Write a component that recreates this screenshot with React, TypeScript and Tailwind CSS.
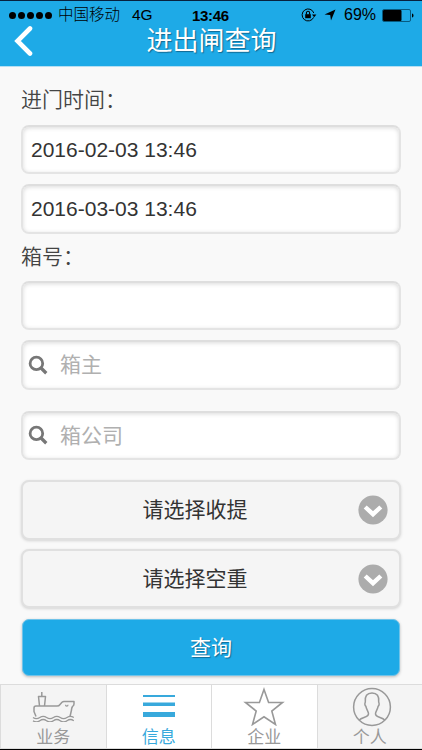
import React from "react";

const inset = "rounded-lg border-2 border-[#e4e4e4] border-t-[#dedede] bg-white shadow-[inset_0_1px_4px_rgba(0,0,0,0.15)]";

function Field({ value, className }: { value?: string; className: string }) {
  return (
    <div className={`${inset} flex items-center px-[8px] text-[21px] leading-none text-[#333] ${className}`}>
      {value}
    </div>
  );
}

function SearchField({ label, className }: { label: string; className: string }) {
  return (
    <div className={`${inset} flex items-center pb-px pl-[5px] ${className}`}>
      <svg width="20" height="20" viewBox="0 0 20 20" fill="none" stroke="#777">
        <circle cx="8.4" cy="8.4" r="6.3" strokeWidth="2.8" />
        <path d="M12.5 12.5L18.3 18.2" strokeWidth="3.3" />
      </svg>
      <span className="ml-[12px] text-[21px] leading-none text-[#b0b0b0]">{label}</span>
    </div>
  );
}

function SelectBox({ label, className }: { label: string; className: string }) {
  return (
    <div
      className={`flex items-center rounded-lg border-2 border-[#e0e0e0] bg-[#f5f5f5] pr-[11px] pl-10 shadow-[0_1px_3px_rgba(0,0,0,0.15)] ${className}`}
    >
      <span className="flex-1 pr-[31px] pb-px text-center text-[21px] leading-none text-[#333]">{label}</span>
      <svg width="30" height="30" viewBox="0 0 30 30">
        <circle cx="15" cy="15" r="14.6" fill="#acacac" />
        <path d="M7.2 12L15 19.2L22.8 12" fill="none" stroke="#fff" strokeWidth="4.4" />
      </svg>
    </div>
  );
}

function Tab({
  label,
  active,
  white,
  children,
}: {
  label: string;
  active?: boolean;
  white?: boolean;
  children: React.ReactNode;
}) {
  return (
    <div
      className={`flex flex-1 flex-col items-center border-l border-[#dcdcdc] ${white ? "bg-white" : "bg-[#f4f4f4]"} ${active ? "text-[#38a9dc]" : "text-[#999]"}`}
    >
      <div className="flex h-[42px] items-center">{children}</div>
      <span className="text-[17px] leading-[21px]">{label}</span>
    </div>
  );
}

export default function App() {
  return (
    <div className="flex h-[750px] w-[422px] flex-col overflow-hidden border-t border-b border-t-[#07213e] border-b-black bg-[#f9f9f9] font-['Liberation_Sans','Noto_Sans_CJK_SC',sans-serif]">
      <header className="h-[66px] border-b border-[#b5dff3] bg-[#1eaae7]">
        <div className="flex h-[25px] items-center pt-[3px] pl-[9px] text-[15.5px] leading-none text-black">
          <div className="flex gap-[2px]">
            {[0, 1, 2, 3, 4].map((i) => (
              <span key={i} className="size-[7px] rounded-full bg-black" />
            ))}
          </div>
          <span className="ml-[6px] w-[74px] font-light">中国移动</span>
          <span className="w-[60px]">4G</span>
          <span className="w-[109px] text-[15px] font-bold tracking-[-0.3px]">13:46</span>
          <svg width="16" height="14" viewBox="0 0 16 14" fill="none" stroke="#000">
            <path d="M12.6 9.4A6 6 0 1 1 12.8 5" strokeWidth="1" />
            <path d="M11 6.5h4.4L13.2 9.2z" fill="#000" stroke="none" />
            <rect x="4.2" y="6.2" width="5.6" height="4" fill="#000" stroke="none" />
            <path d="M5.4 6.4V4.9a1.6 1.6 0 0 1 3.2 0v1.5" strokeWidth="1.1" />
          </svg>
          <svg className="ml-[7px]" width="12" height="12" viewBox="0 0 12 12">
            <path d="M11.5.5L7 11.5L6.2 6L.5 5.4z" />
          </svg>
          <span className="ml-[8px] w-[38px] text-[16px]">69%</span>
          <svg width="32" height="13" viewBox="0 0 32 13">
            <rect x=".5" y=".5" width="28" height="12" rx="1.5" fill="none" stroke="#075a80" />
            <rect x="1" y="1" width="18.5" height="11" rx="1" />
            <path d="M30 4.5c2 .5 2 3.5 0 4z" />
          </svg>
        </div>
        <div className="flex h-[30px] items-center pl-[13px]">
          <svg width="22" height="30" viewBox="0 0 22 30" fill="none" stroke="#fff">
            <path d="M17 2.5L4.5 15L17 27.5" strokeWidth="4.6" strokeLinecap="round" strokeLinejoin="miter" />
          </svg>
          <h1 className="flex-1 pr-[34px] pb-px text-center text-[26px] leading-none font-normal text-white [text-shadow:1px_1px_1px_#126992]">
            进出闸查询
          </h1>
        </div>
      </header>

      <main className="flex flex-1 flex-col pr-[21px] pl-[21px]">
        <label className="mt-[20px] h-[26px] text-[21px] leading-[26px] font-[350] text-[#444]">进门时间：</label>
        <Field className="mt-[12px] h-[49px]" value="2016-02-03 13:46" />
        <Field className="mt-[10px] h-[50px] pb-px" value="2016-03-03 13:46" />
        <label className="mt-[10px] h-[26px] text-[21px] leading-[26px] font-[350] text-[#444]">箱号：</label>
        <Field className="mt-[11px] h-[49px]" />
        <SearchField className="mt-[10px] h-[50px]" label="箱主" />
        <SearchField className="mt-[21px] h-[49px]" label="箱公司" />
        <SelectBox className="mt-[20px] h-[60px]" label="请选择收提" />
        <SelectBox className="mt-[9px] h-[59px]" label="请选择空重" />
        <button className="mx-px mt-[11px] h-[57px] rounded-[7px] border border-[#70c3e9] bg-[#1eaae7] text-[21px] leading-none text-white shadow-[0_1px_3px_rgba(0,0,0,0.25)] [text-shadow:1px_1px_1px_#116a94]">
          查询
        </button>
      </main>

      <nav className="flex h-[65px] border-t border-b border-[#dcdcdc]">
        <Tab label="业务">
          <svg width="44" height="32" viewBox="0 0 44 32" fill="none" stroke="#999" strokeWidth="1.5" strokeLinejoin="round">
            <path d="M5 26.5L3 21.5V18Q3 16 5 16H26Q28 16 29 14.5L31 12.2Q31.8 11.5 33 11.5H43V14Q43 15.5 41.5 16.5Q40.5 18 40.5 20L39 26.5" />
            <path d="M8.5 16L7.5 6.5H14.5L13.5 16M10.8 6.5V2" />
            <path d="M34.5 14.8c0 1.8 2.5 1.8 2.5 0" strokeWidth="1.2" />
            <path d="M2 27.5q3.4 2.4 6.8 0t6.8 0t6.8 0t6.8 0t6.8 0t6.8 0M2 30.7q3.4 2.4 6.8 0t6.8 0t6.8 0t6.8 0t6.8 0t6.8 0" strokeWidth="1.3" />
          </svg>
        </Tab>
        <Tab label="信息" active white>
          <svg width="32" height="24" viewBox="0 0 32 24" fill="#38a9dc">
            <rect y="1" width="32" height="2" />
            <rect y="8.5" width="32" height="3.5" />
            <rect y="18" width="32" height="5" />
          </svg>
        </Tab>
        <Tab label="企业" white>
          <svg width="42" height="40" viewBox="0 0 42 40" fill="none" stroke="#999" strokeWidth="1.6">
            <path d="M21 3.5L25.6 16.5H39.5L28.8 25L32.5 38.5L21 30.8L9.5 38.5L13.2 25L2.5 16.5H16.4z" />
          </svg>
        </Tab>
        <Tab label="个人">
          <svg className="translate-x-[2px] translate-y-px" width="40" height="40" viewBox="0 0 40 40" fill="none" stroke="#999" strokeWidth="1.5">
            <circle cx="20" cy="20" r="18.4" />
            <path d="M7.3 33C10 30 17 30.5 16.5 26.5C16.3 24.5 14.2 22 13.9 19.3C12.6 18.5 12.7 16.2 13.3 15.2C12.6 9 15 6 20 6S27.4 9 26.7 15.2C27.3 16.2 27.4 18.5 26.1 19.3C25.8 22 23.7 24.5 23.5 26.5C23 30.5 30 30 32.7 33" />
          </svg>
        </Tab>
      </nav>
    </div>
  );
}
